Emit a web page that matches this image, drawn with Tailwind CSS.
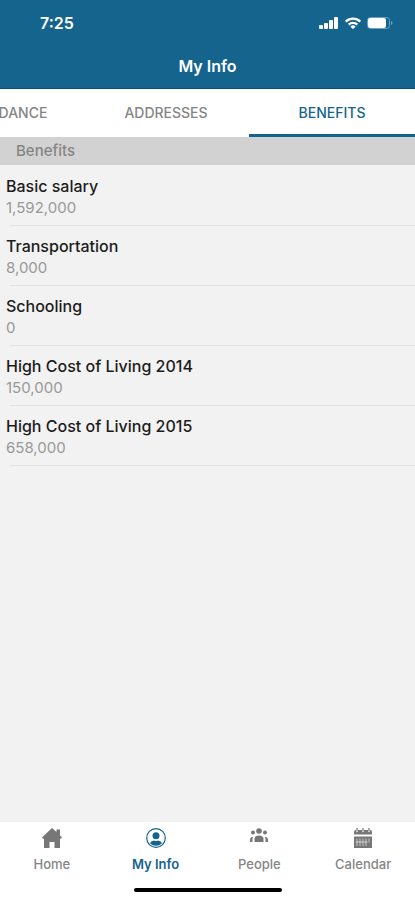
<!DOCTYPE html>
<html lang="en">
<head>
    <meta charset="UTF-8">
    <meta name="viewport" content="width=device-width, initial-scale=1.0">
    <title>My Info</title>
    <script src="https://cdn.jsdelivr.net/npm/@tailwindcss/browser@4"></script>
</head>
<body class="bg-[#f2f2f2] font-['Inter',sans-serif]">
    <div class="flex flex-col min-h-screen">
        <!-- Status bar and title -->
        <header class="bg-[#14648d] text-white border-b border-[#07517f]">
            <div class="flex items-center justify-between h-11 pl-10 pr-5 pt-0.5">
                <span class="text-base font-semibold">7:25</span>
                <div class="flex items-center gap-1">
                    <svg class="w-5 h-3" viewBox="0 0 20 12" fill="currentColor" aria-hidden="true">
                        <rect x="0" y="8" width="4" height="4" rx="1" />
                        <rect x="5" y="6" width="4" height="6" rx="1" />
                        <rect x="10" y="3" width="4" height="9" rx="1" />
                        <rect x="15" y="0" width="4" height="12" rx="1" />
                    </svg>
                    <svg class="w-5 h-3" viewBox="0 0 20 12" fill="none" stroke="currentColor" stroke-width="2.2" aria-hidden="true">
                        <path d="M2.7 4.6a10.5 10.5 0 0 1 14.6 0" />
                        <path d="M5.7 7.6a6.2 6.2 0 0 1 8.6 0" />
                        <path d="M10 12L7.4 9.7a3.6 3.6 0 0 1 5.2 0z" fill="currentColor" stroke="none" />
                    </svg>
                    <svg class="w-7 h-3" viewBox="0 0 28 12" aria-hidden="true">
                        <rect x=".5" y=".5" width="22" height="11" rx="3" fill="none" stroke="#6fa2bc" />
                        <rect x="1" y="1" width="18" height="10" rx="2" fill="#fff" />
                        <path d="M24 4v4q1.500-.7 1.500-2t-1.500-2z" fill="#6fa2bc" />
                    </svg>
                </div>
            </div>
            <h1 class="h-11 flex items-center justify-center text-base font-semibold">My Info</h1>
        </header>

        <!-- Tabs -->
        <nav class="flex justify-end overflow-hidden h-12 bg-white text-sm font-medium text-[#858585]">
            <a href="#attendance" class="w-2/5 shrink-0 flex items-center justify-center">ATTENDANCE</a>
            <a href="#addresses" class="w-2/5 shrink-0 flex items-center justify-center">ADDRESSES</a>
            <a href="#benefits" class="w-2/5 shrink-0 flex items-center justify-center text-[#14648d] border-b-3 border-[#14648d] pt-0.5">BENEFITS</a>
        </nav>

        <main id="benefits" class="flex-1">
            <h2 class="h-7 px-4 flex items-center bg-[#d2d2d2] text-[15px] font-medium text-[#858585]">Benefits</h2>
            <dl class="text-[15px] leading-[21px]">
                <div class="h-15 pl-1.5 pt-[11px] relative after:absolute after:-bottom-px after:left-2.5 after:right-0 after:h-px after:bg-[#e2e2e2]">
                    <dt class="text-base leading-[21px] font-medium text-[#1c1c1c]">Basic salary</dt>
                    <dd class="text-[#999999]">1,592,000</dd>
                </div>
                <div class="h-15 pl-1.5 pt-[11px] relative after:absolute after:-bottom-px after:left-2.5 after:right-0 after:h-px after:bg-[#e2e2e2]">
                    <dt class="text-base leading-[21px] font-medium text-[#1c1c1c]">Transportation</dt>
                    <dd class="text-[#999999]">8,000</dd>
                </div>
                <div class="h-15 pl-1.5 pt-[11px] relative after:absolute after:-bottom-px after:left-2.5 after:right-0 after:h-px after:bg-[#e2e2e2]">
                    <dt class="text-base leading-[21px] font-medium text-[#1c1c1c]">Schooling</dt>
                    <dd class="text-[#999999]">0</dd>
                </div>
                <div class="h-15 pl-1.5 pt-[11px] relative after:absolute after:-bottom-px after:left-2.5 after:right-0 after:h-px after:bg-[#e2e2e2]">
                    <dt class="text-base leading-[21px] font-medium text-[#1c1c1c]">High Cost of Living 2014</dt>
                    <dd class="text-[#999999]">150,000</dd>
                </div>
                <div class="h-15 pl-1.5 pt-[11px] relative after:absolute after:-bottom-px after:left-2.5 after:right-0 after:h-px after:bg-[#e2e2e2]">
                    <dt class="text-base leading-[21px] font-medium text-[#1c1c1c]">High Cost of Living 2015</dt>
                    <dd class="text-[#999999]">658,000</dd>
                </div>
            </dl>
        </main>

        <!-- Bottom navigation -->
        <footer class="bg-white">
            <nav class="grid grid-cols-4 pt-1.5 text-[13px] leading-4 font-medium text-[#858585]">
                <a href="#home" class="flex flex-col items-center gap-2">
                    <svg class="w-5 h-5" viewBox="0 0 20 20" fill="#777" aria-hidden="true">
                        <path d="M10 0l4.500 4V1.500H18v6L20 9.500 18.800 11 18 10.300V20h-5.500v-6h-5v6H2v-9.700l-.8.700L0 9.500z" />
                    </svg>
                    Home
                </a>
                <a href="#my-info" class="flex flex-col items-center gap-2 font-semibold text-[#14648d]">
                    <svg class="w-5 h-5" viewBox="0 0 20 20" fill="currentColor" aria-hidden="true">
                        <circle cx="10" cy="10" r="9.300" fill="none" stroke="currentColor" stroke-width="1.200" />
                        <circle cx="10" cy="7.800" r="3.500" />
                        <path d="M4 15.200q.6-2.200 4-2.700 2 1.200 4 0 3.400.5 4 2.700-2.500 2.600-6 2.600t-6-2.600z" />
                    </svg>
                    My Info
                </a>
                <a href="#people" class="flex flex-col items-center gap-2">
                    <svg class="w-5 h-5" viewBox="0 0 20 20" fill="#777" aria-hidden="true">
                        <circle cx="10" cy="3" r="2.800" />
                        <circle cx="4" cy="4.500" r="2" />
                        <circle cx="16" cy="4.500" r="2" />
                        <path d="M5.500 14v-3.500Q6 7.500 10 7.500t4.500 3V14z" />
                        <path d="M1 14v-2.500Q1.300 9 4.300 8.700q-.8 1-.8 2.300v3z" />
                        <path d="M19 14v-2.500q-.3-2.500-3.300-2.800.8 1 .8 2.300v3z" />
                    </svg>
                    People
                </a>
                <a href="#calendar" class="flex flex-col items-center gap-2">
                    <svg class="w-5 h-5" viewBox="0 0 20 20" fill="#777" aria-hidden="true">
                        <path d="M1 6.500V4Q1 2 3 2v1.500q1 1.500 2 0V2h4v1.500q1 1.500 2 0V2h4v1.500q1 1.500 2 0V2q2 0 2 2v2.500z" />
                        <path d="M3.400 0h1.200v3.500H3.400zM9.400 0h1.200v3.500H9.400zM15.400 0h1.200v3.500h-1.200z" />
                        <path d="M1 8.500h18V20H1z" />
                        <path d="M4 10.500v7.500M7 10.500v7.500M10 10.500v7.500M13 10.500v7.500M16 10.500v4M2.500 14h12" fill="none" stroke="#fff" stroke-width=".6" />
                    </svg>
                    Calendar
                </a>
            </nav>
            <div class="w-37 h-1 mx-auto mt-4 mb-2 rounded-full bg-black"></div>
        </footer>
    </div>
</body>
</html>
